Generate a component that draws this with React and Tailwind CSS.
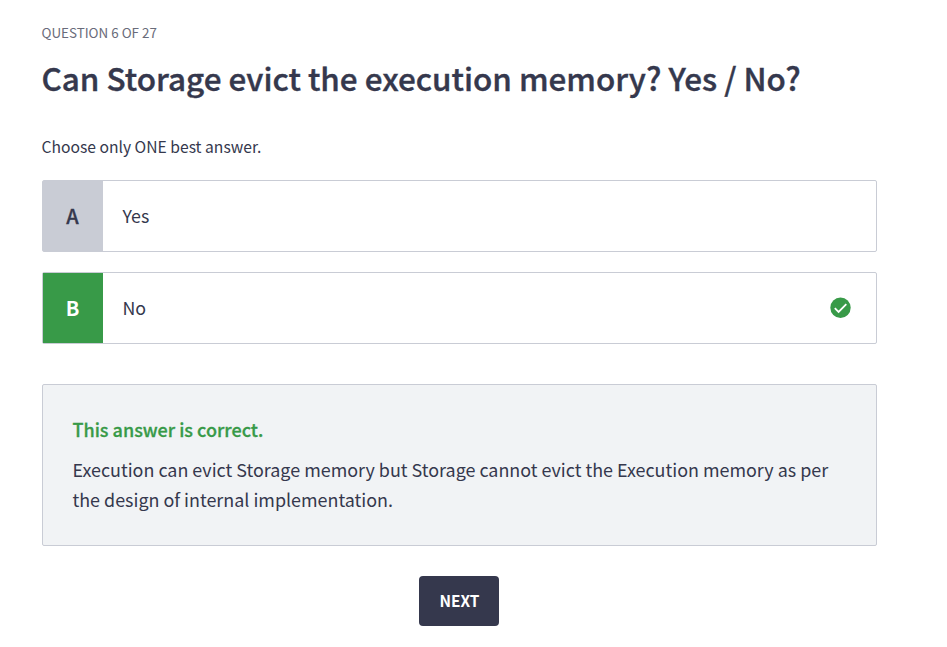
function Option({ letter, label, correct }) {
  return (
    <div className="flex h-[72px] rounded-[2px] border border-[#c9ccd5] bg-white">
      <div
        className={
          correct
            ? "flex w-[60px] items-center justify-center bg-[#389a48] pr-px text-[20px] font-bold text-white"
            : "flex w-[60px] items-center justify-center bg-[#c9ccd5] pr-px text-[20px] font-medium text-[#35384d] [-webkit-text-stroke:0.3px]"
        }
      >
        {letter}
      </div>
      <div className="flex flex-1 items-center justify-between pl-[19.5px] pr-[25.5px] text-[17.8px]">
        <span className="pb-0.5">{label}</span>
        {correct && (
          <svg className="mb-px" width="21" height="21" viewBox="0 0 21 21" fill="none">
            <circle cx="10.5" cy="10.7" r="10.2" fill="#389a48" />
            <path d="M4.8 11.2 8.6 15 16.3 7.2" stroke="#fff" strokeWidth="1.8" />
          </svg>
        )}
      </div>
    </div>
  );
}

export default function App() {
  return (
    <main className="h-[647px] overflow-hidden bg-white pl-[42px] pr-[70px] pt-[22px] font-['Noto_Sans_CJK_SC','Noto_Sans',sans-serif] text-[#35384d]">
      <p className="-ml-[0.5px] h-5 text-[13.4px] leading-5 text-[#696b7a]">QUESTION 6 OF 27</p>
      <h1 className="-ml-[0.5px] mt-[14px] h-[44px] whitespace-nowrap text-[31.43px] font-medium leading-[44px] [-webkit-text-stroke:0.4px]">
        Can Storage evict the execution memory? Yes / No?
      </h1>
      <p className="-ml-[0.5px] mt-[35px] h-6 text-[15.67px] leading-6">Choose only ONE best answer.</p>
      <div className="mt-[21px] flex flex-col gap-5">
        <Option letter="A" label="Yes" />
        <Option letter="B" label="No" correct />
      </div>
      <section className="mt-10 h-[162px] rounded-[2px] border border-[#c9ccd5] bg-[#f1f3f5] pl-[29.5px] pt-[29px]">
        <h2 className="h-[30px] text-[18px] font-medium leading-[30px] text-[#389a48] [-webkit-text-stroke:0.3px]">
          This answer is correct.
        </h2>
        <p className="mt-[10px] whitespace-nowrap text-[17.91px] leading-[30px]">
          Execution can evict Storage memory but Storage cannot evict the Execution memory as per
          <br />
          the design of internal implementation.
        </p>
      </section>
      <button className="ml-[377px] mt-[30px] flex h-[50px] w-20 items-center justify-center rounded-[4px] bg-[#35384d] pl-px text-[15.4px] font-bold text-white">
        NEXT
      </button>
    </main>
  );
}
